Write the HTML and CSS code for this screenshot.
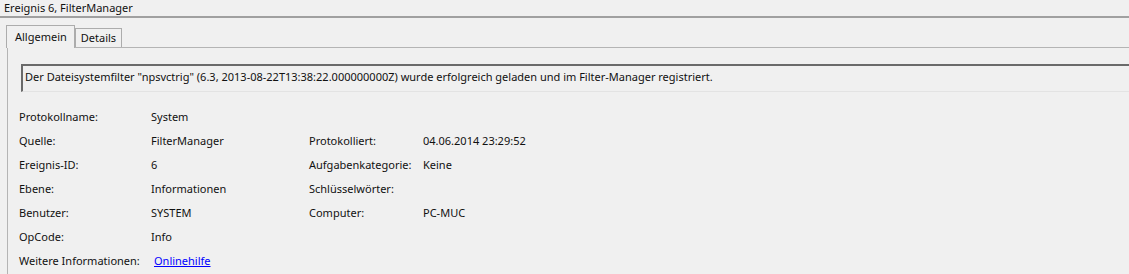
FILE: index.html
```html
<!DOCTYPE html>
<html lang="de">
  <head>
    <meta charset="UTF-8" />
    <title>Ereignis 6, FilterManager</title>
    <link rel="stylesheet" href="styles.css">
  </head>
  <body>
    <div class="title">Ereignis 6, FilterManager</div>

    <div class="tabs">
      <div class="tab active">Allgemein</div>
      <div class="tab">Details</div>
    </div>

    <div class="panel">
      <div class="message">
        Der Dateisystemfilter "npsvctrig" (6.3, 2013-08-22T13:38:22.000000000Z) wurde erfolgreich geladen und im Filter-Manager registriert.
      </div>

      <div class="fields">
        <span>Protokollname:</span><span>System</span><span></span><span></span>
        <span>Quelle:</span><span>FilterManager</span><span>Protokolliert:</span><span>04.06.2014 23:29:52</span>
        <span>Ereignis-ID:</span><span>6</span><span>Aufgabenkategorie:</span><span>Keine</span>
        <span>Ebene:</span><span>Informationen</span><span>Schlüsselwörter:</span><span></span>
        <span>Benutzer:</span><span>SYSTEM</span><span>Computer:</span><span>PC-MUC</span>
        <span>OpCode:</span><span>Info</span><span></span><span></span>
        <span>Weitere Informationen:</span><span><a href="#" class="link">Onlinehilfe</a></span><span></span><span></span>
      </div>
    </div>
  </body>
</html>
```

FILE: styles.css
```css
* {
  margin: 0;
  padding: 0;
  box-sizing: border-box;
}
body {
  background-color: #f0f0f0;
  color: #111;
  font-family: "Noto Sans", "Open Sans", sans-serif;
  font-size: 11px;
  overflow: hidden;
}
.title {
  height: 18px;
  padding: 0 4px;
  line-height: 16px;
  border-bottom: 2px solid #a0a0a0;
}
.tabs {
  display: flex;
  align-items: flex-end;
  height: 29px;
  padding-left: 6px;
}
.tab {
  height: 19px;
  padding: 0 5px;
  line-height: 18px;
  border: 1px solid #acacac;
  border-bottom: none;
  background-color: #f0f0f0;
}
.tab.active {
  height: 23px;
  padding: 2px 7px 0 8px;
  margin-bottom: -1px;
  background-color: #f0f0f0;
}
.panel {
  border-top: 1px solid #b4b4b4;
  border-left: 1px solid #b4b4b4;
  margin-left: 7px;
  padding: 16px 0 0 11px;
  height: 230px;
}
.message {
  height: 28px;
  margin-left: 2px;
  padding: 3px 2px;
  line-height: 16px;
  border-top: 2px solid #6a6a6a;
  border-left: 2px solid #6a6a6a;
  border-bottom: 1px solid #e3e3e3;
  white-space: nowrap;
}
.fields {
  display: grid;
  grid-template-columns: 132px 158px 114px auto;
  grid-auto-rows: 24px;
  align-items: center;
  margin-top: 12px;
}
.link {
  color: #0000ff;
  text-decoration: underline;
  margin-left: 3px;
}
```
